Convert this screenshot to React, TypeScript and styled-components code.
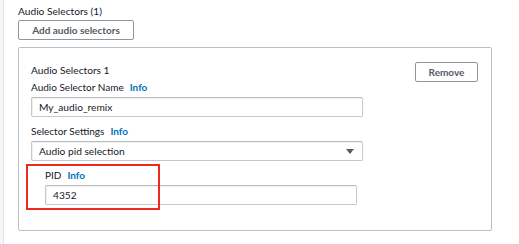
import React from "react";
import styled, { createGlobalStyle } from "styled-components";

const Global = createGlobalStyle`
  html, body { margin: 0; padding: 0; background: #ffffff; }
  body { font-family: Lato, "Liberation Sans", Arial, sans-serif; color: #16191f; }
  * { box-sizing: border-box; }
`;

const Page = styled.div`
  display: flex;
  width: 519px;
  height: 244px;
  overflow: hidden;
`;

const SideStrip = styled.div`
  width: 4px;
  flex: none;
  background: #f5f6f6;
  border-right: 1px solid #dfe3e3;
`;

const Content = styled.div`
  flex: 1;
  padding: 6px 0 0 14px;
  display: flex;
  flex-direction: column;
  align-items: flex-start;
`;

const SectionTitle = styled.div`
  font-size: 10.2px;
  line-height: 11px;
  height: 14px;
  color: #16191f;
`;

const Button = styled.button`
  font-family: Lato, "Liberation Sans", Arial, sans-serif;
  font-size: 10px;
  font-weight: 700;
  color: #545b64;
  background: #ffffff;
  border: 1px solid #8d979b;
  border-radius: 2px;
  height: 20px;
  padding: 0;
  display: inline-flex;
  align-items: center;
  justify-content: center;
  cursor: pointer;
`;

const AddButton = styled(Button)`
  width: 116px;
`;

const RemoveButton = styled(Button)`
  width: 63px;
`;

const Panel = styled.div`
  position: relative;
  margin-top: 7px;
  width: 474px;
  height: 184px;
  border: 1px solid #b9c1c2;
  border-radius: 2px;
  padding: 13px 13px 0 12px;
  display: flex;
  flex-direction: column;
`;

const PanelHeader = styled.div`
  display: flex;
  justify-content: space-between;
  align-items: center;
  height: 21px;
`;

const PanelTitle = styled.div`
  font-size: 10.2px;
  line-height: 11px;
  margin-top: -2px;
`;

const Field = styled.div<{ $indent?: number; $top?: number }>`
  display: flex;
  flex-direction: column;
  margin-top: ${(p) => p.$top ?? 0}px;
  padding-left: ${(p) => p.$indent ?? 0}px;
`;

const Label = styled.div`
  font-size: 10px;
  line-height: 11px;
  height: 11px;
  display: flex;
  gap: 6px;
  align-items: center;
  margin-bottom: 4px;
`;

const InfoLink = styled.a`
  color: #0073bb;
  font-weight: 700;
  text-decoration: none;
  font-size: 10px;
`;

const TextBox = styled.div<{ $width: number }>`
  width: ${(p) => p.$width}px;
  height: 20px;
  border: 1px solid #c3c9ca;
  border-top-color: #b5bcbd;
  border-radius: 2px;
  box-shadow: inset 1px 1px 0 rgba(0, 0, 0, 0.06);
  padding: 0 7px;
  font-size: 10.2px;
  display: flex;
  align-items: center;
  justify-content: space-between;
  color: #16191f;
  background: #ffffff;
`;

const Arrow = styled.svg`
  width: 8px;
  height: 5px;
  margin-right: 1px;
`;

const Highlight = styled.div`
  position: absolute;
  left: 7px;
  top: 116px;
  width: 134px;
  height: 46px;
  border: 2px solid #ee2a1f;
  pointer-events: none;
`;

export default function App() {
  return (
    <>
      <Global />
      <Page>
        <SideStrip />
        <Content>
          <SectionTitle>Audio Selectors (1)</SectionTitle>
          <AddButton>Add audio selectors</AddButton>
          <Panel>
            <PanelHeader>
              <PanelTitle>Audio Selectors 1</PanelTitle>
              <RemoveButton>Remove</RemoveButton>
            </PanelHeader>
            <Field>
              <Label>
                Audio Selector Name <InfoLink>Info</InfoLink>
              </Label>
              <TextBox $width={332}>My_audio_remix</TextBox>
            </Field>
            <Field $top={9}>
              <Label>
                Selector Settings <InfoLink>Info</InfoLink>
              </Label>
              <TextBox $width={332}>
                Audio pid selection
                <Arrow viewBox="0 0 8 5">
                  <path d="M0 0 H8 L4 5 Z" fill="#545b64" />
                </Arrow>
              </TextBox>
            </Field>
            <Field $indent={14} $top={9}>
              <Label>
                PID <InfoLink>Info</InfoLink>
              </Label>
              <TextBox $width={312}>4352</TextBox>
            </Field>
            <Highlight />
          </Panel>
        </Content>
      </Page>
    </>
  );
}
